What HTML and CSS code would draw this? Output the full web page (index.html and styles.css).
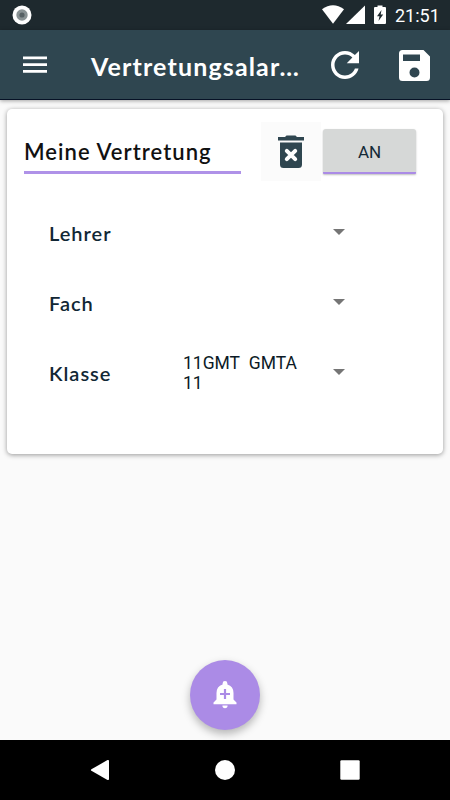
FILE: index.html
```html
<!DOCTYPE html>
<html lang="de">
    <head>
        <meta charset="utf-8">
        <title>Vertretungsalarm</title>
        <link rel="stylesheet" href="styles.css">
    </head>
    <body>
        <div class="statusbar">
            <svg class="status-dot" width="20" height="20" viewBox="0 0 20 20">
                <circle cx="10" cy="10" r="9.5" fill="#FFF"/>
                <circle cx="10" cy="10" r="5.7" fill="#899294"/>
                <circle cx="10" cy="10" r="2.6" fill="#566064"/>
            </svg>
            <svg class="status-icons" width="66" height="20" viewBox="0 0 66 20" fill="#FFF">
                <path d="M0 4.3Q11-3.7 22 4.3L11 18.7z"/>
                <path d="M24 19L43 .5V19z"/>
                <path d="M52 3Q52 2 53 2h2.500V.5h5V2H63q1 0 1 1v15q0 1-1 1H53q-1 0-1-1z"/>
                <path d="M59.500 5l-4.500 6.300h2.500l-1 4.700 4.700-6.500h-2.500z" fill="#1E292E"/>
            </svg>
            <span class="clock">21:51</span>
        </div>
        <div class="appbar">
            <button class="btn-menu">
                <svg width="24" height="18" viewBox="0 0 24 18" fill="#FFF">
                    <path d="M0 .5h24v2.700H0zM0 7.300h24V10H0zM0 14h24v2.700H0z"/>
                </svg>
            </button>
            <h1 class="title">Vertretungsalar…</h1>
            <button class="btn-refresh">
                <svg width="28" height="28" viewBox="4 4 16 16" fill="#FFF">
                    <path d="M17.650 6.350C16.200 4.900 14.210 4 12 4c-4.420 0-7.990 3.580-7.990 8s3.570 8 7.990 8c3.730 0 6.840-2.550 7.730-6h-2.080c-.82 2.330-3.040 4-5.650 4-3.310 0-6-2.690-6-6s2.690-6 6-6c1.660 0 3.140.69 4.220 1.780L13 11h7V4l-2.350 2.350z"/>
                </svg>
            </button>
            <button class="btn-save">
                <svg width="31" height="31" viewBox="0 0 31 31">
                    <path d="M3.500 0H24.500L31 6.500V27.500Q31 31 27.500 31H3.500Q0 31 0 27.500V3.500Q0 0 3.500 0zM4 4.500V11H21V4.500zM15.500 17.500a5 5 0 1 0 0 10a5 5 0 1 0 0-10z" fill="#FFF" fill-rule="evenodd"/>
                </svg>
            </button>
        </div>
        <div class="content">
            <div class="card">
                <div class="card-header">
                    <input type="text" class="name" value="Meine Vertretung">
                    <button class="btn-delete">
                        <svg width="26" height="34" viewBox="0 0 26 34">
                            <path d="M0 2h7L8.500.5h9L19 2h7v3.500H0zM2 7.500h22V29.500q0 3.500-3.500 3.500h-15Q2 33 2 29.500z" fill="#2F4650"/>
                            <path d="M8.800 15.800l8.400 8.400M17.200 15.800l-8.400 8.400" fill="none" stroke="#FFF" stroke-width="4" stroke-linecap="round"/>
                        </svg>
                    </button>
                    <button class="toggle">AN</button>
                </div>
                <div class="row">
                    <span class="label">Lehrer</span>
                    <span class="value"></span>
                    <i class="arrow"></i>
                </div>
                <div class="row">
                    <span class="label">Fach</span>
                    <span class="value"></span>
                    <i class="arrow"></i>
                </div>
                <div class="row">
                    <span class="label">Klasse</span>
                    <span class="value">11GMT&nbsp; GMTA 11</span>
                    <i class="arrow"></i>
                </div>
            </div>
            <button class="fab">
                <svg width="24" height="28" viewBox="0 0 24 28">
                    <path d="M9.600 3.500V2.500a2.400 2.400 0 0 1 4.800 0V3.500Q20.500 5.400 20.500 12V18.500L23.500 21.500V23.300H.5V21.500L3.500 18.500V12Q3.500 5.400 9.600 3.500zM9.400 24.600h5.200a2.600 2.600 0 0 1-5.200 0z" fill="#FFF"/>
                    <path d="M12 8v10M7 13h10" stroke="#AB8BE6" stroke-width="2.200"/>
                </svg>
            </button>
        </div>
        <div class="navbar">
            <svg width="20" height="22" viewBox="0 0 20 22" fill="#FFF">
                <path d="M1.400 10.200L17.500 1.100Q19 .5 19 2V20q0 1.500-1.500.9L1.400 11.800q-1-.8 0-1.600z"/>
            </svg>
            <svg width="20" height="20" viewBox="0 0 20 20" fill="#FFF">
                <circle cx="10" cy="10" r="10"/>
            </svg>
            <svg width="20" height="20" viewBox="0 0 20 20" fill="#FFF">
                <rect x=".3" y=".3" width="19.400" height="19.400" rx="1.200"/>
            </svg>
        </div>
    </body>
</html>
```
FILE: styles.css
```css
* {
box-sizing: border-box;
}
body {
margin: 0;
height: 800px;
display: flex;
flex-direction: column;
overflow: hidden;
background-color: #FAFAFA;
font-family: Roboto, sans-serif;
}
button {
padding: 0;
border: 0;
background: none;
cursor: pointer;
}
svg {
display: block;
}
.statusbar {
flex: 0 0 30px;
display: flex;
align-items: center;
padding: 0 11px 0 12px;
background-color: #1E292E;
color: #FFF;
}
.status-icons {
margin-left: auto;
}
.clock {
width: 44px;
margin-left: 7px;
margin-top: 2px;
font-size: 18px;
line-height: 20px;
white-space: nowrap;
}
.appbar {
flex: 0 0 70px;
display: flex;
align-items: center;
padding: 0 20px 0 23px;
background-color: #2F4650;
border-bottom: 1px solid #071226;
box-shadow: 0 1px 4px rgba(0, 0, 0, .35);
z-index: 1;
}
.title {
width: 220px;
margin: 2px 0 0 44px;
color: #FFF;
font-family: Lato, sans-serif;
font-size: 25px;
font-weight: bold;
letter-spacing: 1.150px;
line-height: 32px;
white-space: nowrap;
}
.btn-refresh {
margin-left: 20px;
}
.btn-save {
margin-left: auto;
margin-top: 1px;
}
.content {
flex: 1;
display: flex;
flex-direction: column;
align-items: center;
padding: 9px 7px 10px;
}
.card {
width: 436px;
height: 345px;
padding-top: 13px;
background-color: #FFF;
border-radius: 5px;
box-shadow: 0 1px 5px rgba(0, 0, 0, .4);
}
.card-header {
display: flex;
align-items: center;
height: 59px;
padding: 0 27px 0 17px;
margin-bottom: 17px;
}
.name {
width: 217px;
height: 41px;
margin-top: 3px;
padding: 0;
border: 0;
border-bottom: 3px solid #AF92E8;
outline: none;
background: none;
color: #111;
font-family: Lato, sans-serif;
font-size: 22px;
font-weight: 600;
letter-spacing: 1.050px;
}
.btn-delete {
display: flex;
align-items: center;
justify-content: center;
width: 60px;
height: 59px;
margin-left: 20px;
background-color: #FBFBFB;
}
.toggle {
width: 93px;
height: 45px;
margin-left: 2px;
padding-top: 3px;
background-color: #D6D8D7;
border-bottom: 2px solid #AB8BE6;
border-radius: 3px 3px 1px 1px;
box-shadow: 0 1px 2px rgba(0, 0, 0, .25);
color: #152A38;
font-family: Roboto, sans-serif;
font-size: 17px;
}
.row {
display: grid;
grid-template-columns: 134px 130px 60px;
align-items: center;
height: 70px;
padding-left: 42px;
color: #112735;
}
.label {
font-family: Lato, sans-serif;
font-size: 20px;
font-weight: 600;
letter-spacing: 1px;
}
.value {
font-size: 17.500px;
line-height: 20px;
color: #0B1A26;
}
.arrow {
justify-self: center;
margin: -3px 0 0 -8px;
border: 6px solid transparent;
border-top-color: #757575;
border-bottom: 0;
}
.fab {
display: flex;
align-items: center;
justify-content: center;
width: 70px;
height: 70px;
margin-top: auto;
border-radius: 50%;
background-color: #AB8BE6;
box-shadow: 0 4px 8px rgba(0, 0, 0, .28);
}
.navbar {
flex: 0 0 60px;
display: flex;
align-items: center;
justify-content: space-between;
padding: 0 90px;
background-color: #000;
z-index: 1;
}
```
